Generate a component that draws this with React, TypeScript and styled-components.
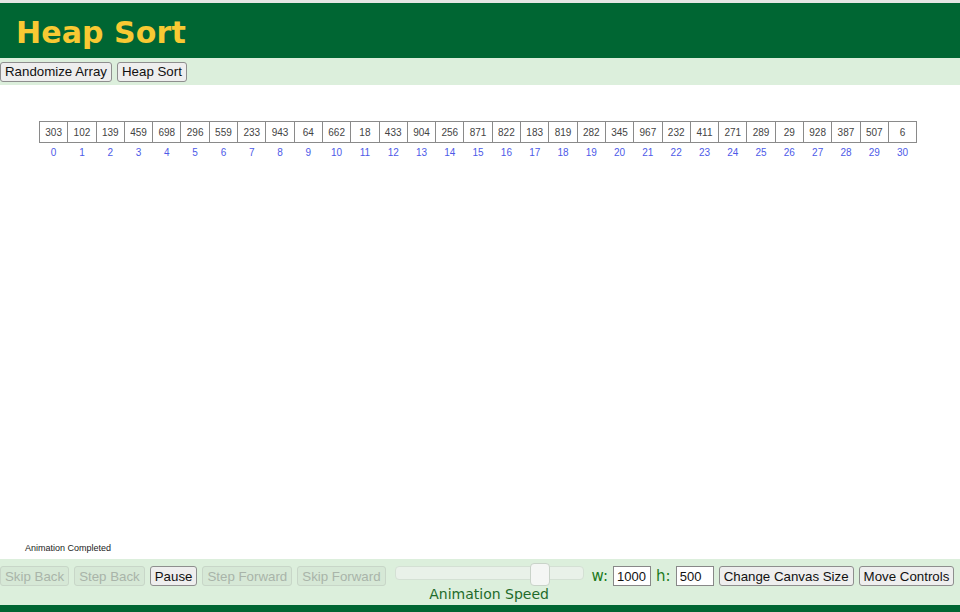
import React from 'react';
import styled, { createGlobalStyle } from 'styled-components';

const Global = createGlobalStyle`
  html,body{margin:0;padding:0;background:#fff}
  #root{height:612px}
`;

const Page = styled.div`display:flex;flex-direction:column;height:612px;width:960px;overflow:hidden;background:#fff;font-family:"Liberation Sans",Arial,sans-serif`;
const TopEdge = styled.div`height:3px;background:#e4e6e4`;
const Header = styled.div`height:55px;background:#006633;display:flex;align-items:center;padding:3px 0 0 16px;box-sizing:border-box`;
const Title = styled.h1`margin:0;font-family:"DejaVu Sans",Verdana,sans-serif;font-weight:700;font-size:30px;color:#f8c933;letter-spacing:0.1px`;
const Toolbar = styled.div`height:27px;background:#dcefdc;display:flex;align-items:center;gap:5px`;
const Btn = styled.button<{ off?: boolean }>`height:20px;padding:0 4px;font-family:"Liberation Sans",Arial,sans-serif;font-size:13.3px;border:1px solid ${({off})=>off?'#c8d6c8':'#8e8e8e'};border-radius:3px;background:${({off})=>off?'#d6e8d6':'#eeeeee'};color:${({off})=>off?'#a9b4a9':'#111'};cursor:default;white-space:nowrap`;
const Canvas = styled.div`flex:1;position:relative;display:flex;flex-direction:column;padding:36px 0 0 39px`;
const Row = styled.div`display:flex`;
const Cell = styled.div`width:29.3px;height:22px;box-sizing:border-box;border:1px solid #8a8a8a;margin-left:-1px;display:flex;align-items:center;justify-content:center;font-size:10px;color:#444;&:first-child{margin-left:0}`;
const Idx = styled.div`width:29.3px;margin-left:-1px;text-align:center;font-size:10px;color:#4d5ae8;padding-top:4px;&:first-child{margin-left:0}`;
const Status = styled.div`margin-top:auto;margin-left:-14px;margin-bottom:6px;font-size:9px;color:#222`;
const Controls = styled.div`height:46px;background:#dcefdc;display:flex;align-items:flex-start;padding-top:7px;box-sizing:border-box;gap:5px`;
const SpeedBox = styled.div`display:flex;flex-direction:column;align-items:center;margin:0 3px 0 4px`;
const Track = styled.div`width:189px;height:14px;border-radius:4px;background:#e9f1e9;border:1px solid #d4e0d4;position:relative;box-sizing:border-box`;
const Thumb = styled.div`position:absolute;top:-4px;width:18px;height:21px;border-radius:4px;background:#f4f6f4;border:1px solid #c9d3c9`;
const SpeedLabel = styled.div`font-family:"DejaVu Sans",Verdana,sans-serif;font-size:14px;color:#1f6b2b;margin-top:6px`;
const Lbl = styled.span`font-family:"DejaVu Sans",Verdana,sans-serif;font-size:15px;color:#1c7a1c;line-height:20px`;
const Inp = styled.input`width:38px;height:20px;box-sizing:border-box;border:1px solid #888;padding:0 3px;font-family:"Liberation Sans",Arial,sans-serif;font-size:13px;background:#fff;color:#111`;
const Bottom = styled.div`height:7px;background:#006633`;

const values = [303,102,139,459,698,296,559,233,943,64,662,18,433,904,256,871,822,183,819,282,345,967,232,411,271,289,29,928,387,507,6];

export default function App() {
  return (
    <Page>
      <Global />
      <TopEdge />
      <Header><Title>Heap Sort</Title></Header>
      <Toolbar>
        <Btn>Randomize Array</Btn>
        <Btn>Heap Sort</Btn>
      </Toolbar>
      <Canvas>
        <Row>{values.map((v,i)=><Cell key={i}>{v}</Cell>)}</Row>
        <Row>{values.map((_,i)=><Idx key={i}>{i}</Idx>)}</Row>
        <Status>Animation Completed</Status>
      </Canvas>
      <Controls>
        <Btn off>Skip Back</Btn>
        <Btn off>Step Back</Btn>
        <Btn>Pause</Btn>
        <Btn off>Step Forward</Btn>
        <Btn off>Skip Forward</Btn>
        <SpeedBox>
          <Track><Thumb style={{left: `${Math.round(0.71*189)}px`}} /></Track>
          <SpeedLabel>Animation Speed</SpeedLabel>
        </SpeedBox>
        <Lbl>w:</Lbl>
        <Inp defaultValue="1000" />
        <Lbl>h:</Lbl>
        <Inp defaultValue="500" />
        <Btn>Change Canvas Size</Btn>
        <Btn>Move Controls</Btn>
      </Controls>
      <Bottom />
    </Page>
  );
}
